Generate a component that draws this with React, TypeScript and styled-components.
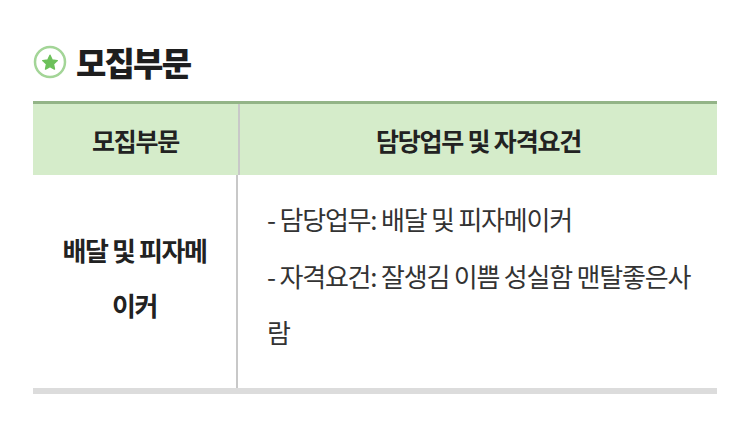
import styled, { createGlobalStyle } from "styled-components";

const GlobalStyle = createGlobalStyle`
  html, body {
    margin: 0;
    padding: 0;
    background: #ffffff;
  }
  body {
    font-family: "Noto Sans CJK KR", "Noto Sans", sans-serif;
    color: #222222;
  }
`;

const green = "#93b487";
const headerBg = "#d5ecca";

function StarIcon() {
  return (
    <svg width="34" height="34" viewBox="0 0 34 34">
      <circle cx="17" cy="17" r="15" fill="none" stroke="#a3d597" strokeWidth="2.5" />
      <path
        d="M17 10.2L19.2 15 24.3 15.6 20.5 19.1 21.5 24.1 17 21.6 12.5 24.1 13.5 19.1 9.7 15.6 14.8 15Z"
        fill="#6cc05a"
        stroke="#6cc05a"
        strokeWidth="1.4"
        strokeLinejoin="round"
      />
    </svg>
  );
}

export default function App() {
  return (
    <>
      <GlobalStyle />
      <Page>
        <Title>
          <StarIcon />
          <TitleText>모집부문</TitleText>
        </Title>
        <Table>
          <HeaderRow>
            <HeadCell width={205}>모집부문</HeadCell>
            <HeadCell>담당업무 및 자격요건</HeadCell>
          </HeaderRow>
          <BodyRow>
            <NameCell>
              배달 및 피자메
              <br />
              이커
            </NameCell>
            <DetailCell>
              <Line>- 담당업무: 배달 및 피자메이커</Line>
              <Line>- 자격요건: 잘생김 이쁨 성실함 맨탈좋은사람</Line>
            </DetailCell>
          </BodyRow>
        </Table>
      </Page>
    </>
  );
}

const Page = styled.div`
  padding: 40px 33px 0 33px;
  width: 684px;
`;

const Title = styled.h2`
  display: flex;
  align-items: center;
  gap: 9px;
  margin: 0 0 17px 0;
  height: 44px;
  svg {
    flex: none;
  }
`;

const TitleText = styled.span`
  font-size: 33px;
  font-weight: 900;
  letter-spacing: -1.8px;
  color: #1e1e1e;
  line-height: 1;
`;

const Table = styled.div`
  border-top: 3px solid ${green};
  border-bottom: 6px solid #dcdcdc;
`;

const HeaderRow = styled.div`
  display: flex;
  height: 71px;
  background: ${headerBg};
`;

const HeadCell = styled.div<{ width?: number }>`
  flex: ${(p) => (p.width ? `0 0 ${p.width}px` : "1")};
  display: flex;
  align-items: center;
  justify-content: center;
  font-size: 25px;
  font-weight: 700;
  letter-spacing: -1.2px;
  color: #222222;
  & + & {
    border-left: 2px solid #c8c8c8;
  }
`;

const BodyRow = styled.div`
  display: flex;
  height: 213px;
`;

const NameCell = styled.div`
  flex: 0 0 205px;
  display: flex;
  align-items: center;
  justify-content: center;
  padding-bottom: 10px;
  box-sizing: border-box;
  text-align: center;
  font-size: 26px;
  font-weight: 700;
  letter-spacing: -1.4px;
  line-height: 55px;
  color: #222222;
  border-right: 2px solid #c8c8c8;
`;

const DetailCell = styled.div`
  flex: 1;
  padding: 16px 20px 0 29px;
  font-size: 26px;
  letter-spacing: -1.2px;
  line-height: 56.5px;
  color: #333333;
`;

const Line = styled.p`
  margin: 0;
`;
